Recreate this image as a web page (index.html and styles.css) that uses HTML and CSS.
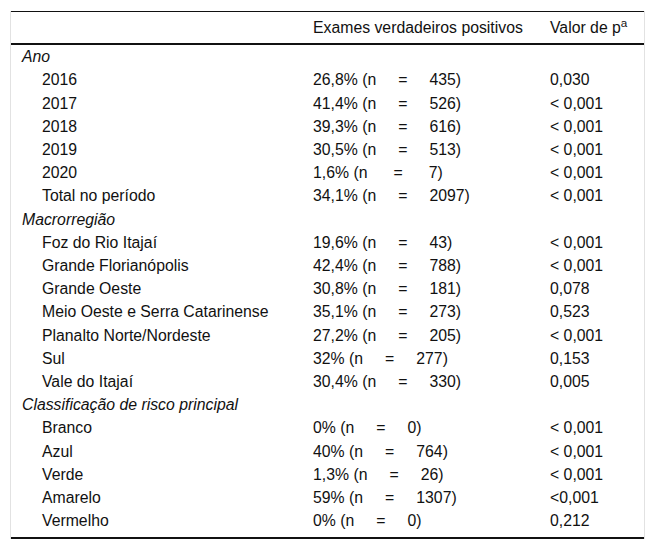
FILE: index.html
```html
<!DOCTYPE html>
<html lang="pt">
<head>
<meta charset="utf-8">
<title>Tabela</title>
<link rel="stylesheet" href="styles.css">
</head>
<body>
<div class="frame">
<table class="data">
<colgroup><col class="c1"><col class="c2"><col class="c3"></colgroup>
<thead>
<tr><th></th><th>Exames verdadeiros positivos</th><th>Valor de p<sup>a</sup></th></tr>
</thead>
<tbody>
<tr class="sec"><td>Ano</td><td></td><td></td></tr>
<tr><td class="ind">2016</td><td>26,8% (n<span class="eq">=</span>435)</td><td>0,030</td></tr>
<tr><td class="ind">2017</td><td>41,4% (n<span class="eq">=</span>526)</td><td>&lt; 0,001</td></tr>
<tr><td class="ind">2018</td><td>39,3% (n<span class="eq">=</span>616)</td><td>&lt; 0,001</td></tr>
<tr><td class="ind">2019</td><td>30,5% (n<span class="eq">=</span>513)</td><td>&lt; 0,001</td></tr>
<tr><td class="ind">2020</td><td>1,6% (n<span class="eq wide">=</span>7)</td><td>&lt; 0,001</td></tr>
<tr><td class="ind">Total no período</td><td>34,1% (n<span class="eq">=</span>2097)</td><td>&lt; 0,001</td></tr>
<tr class="sec"><td>Macrorregião</td><td></td><td></td></tr>
<tr><td class="ind">Foz do Rio Itajaí</td><td>19,6% (n<span class="eq">=</span>43)</td><td>&lt; 0,001</td></tr>
<tr><td class="ind">Grande Florianópolis</td><td>42,4% (n<span class="eq">=</span>788)</td><td>&lt; 0,001</td></tr>
<tr><td class="ind">Grande Oeste</td><td>30,8% (n<span class="eq">=</span>181)</td><td>0,078</td></tr>
<tr><td class="ind">Meio Oeste e Serra Catarinense</td><td>35,1% (n<span class="eq">=</span>273)</td><td>0,523</td></tr>
<tr><td class="ind">Planalto Norte/Nordeste</td><td>27,2% (n<span class="eq">=</span>205)</td><td>&lt; 0,001</td></tr>
<tr><td class="ind">Sul</td><td>32% (n<span class="eq">=</span>277)</td><td>0,153</td></tr>
<tr><td class="ind">Vale do Itajaí</td><td>30,4% (n<span class="eq">=</span>330)</td><td>0,005</td></tr>
<tr class="sec"><td>Classificação de risco principal</td><td></td><td></td></tr>
<tr><td class="ind">Branco</td><td>0% (n<span class="eq">=</span>0)</td><td>&lt; 0,001</td></tr>
<tr><td class="ind">Azul</td><td>40% (n<span class="eq">=</span>764)</td><td>&lt; 0,001</td></tr>
<tr><td class="ind">Verde</td><td>1,3% (n<span class="eq">=</span>26)</td><td>&lt; 0,001</td></tr>
<tr><td class="ind">Amarelo</td><td>59% (n<span class="eq">=</span>1307)</td><td>&lt;0,001</td></tr>
<tr class="last"><td class="ind">Vermelho</td><td>0% (n<span class="eq">=</span>0)</td><td>0,212</td></tr>
</tbody>
</table>
</div>
</body>
</html>
```
FILE: styles.css
```css
html, body {
  background: #fff;
}
body {
  margin: 11px 10px 0 10px;
  font-family: "Liberation Sans", Arial, sans-serif;
  font-size: 15.8px;
  color: #111;
}
.frame {
  border-left: 1px solid #e2e2e2;
  border-right: 1px solid #e2e2e2;
}
.data {
  width: 100%;
  border-collapse: collapse;
  table-layout: fixed;
  border-top: 1px solid #111;
  border-bottom: 2px solid #111;
}
.c1 { width: 291px; }
.c2 { width: 237px; }
.c3 { width: auto; }
.data th, .data td {
  padding: 2px 11px;
  line-height: 19.2px;
  text-align: left;
  vertical-align: middle;
  white-space: nowrap;
  font-weight: normal;
}
.data thead th {
  padding-top: 6px;
  padding-bottom: 6px;
  border-bottom: 2px solid #111;
}
.data sup {
  font-size: 0.74em;
  line-height: 0;
  vertical-align: 0.5em;
}
.sec td {
  font-style: italic;
}
.data td.ind {
  padding-left: 31px;
}
.eq {
  margin: 0 22px;
}
.eq.wide {
  margin: 0 26px;
}
.last td {
  padding-bottom: 7px;
}
```
